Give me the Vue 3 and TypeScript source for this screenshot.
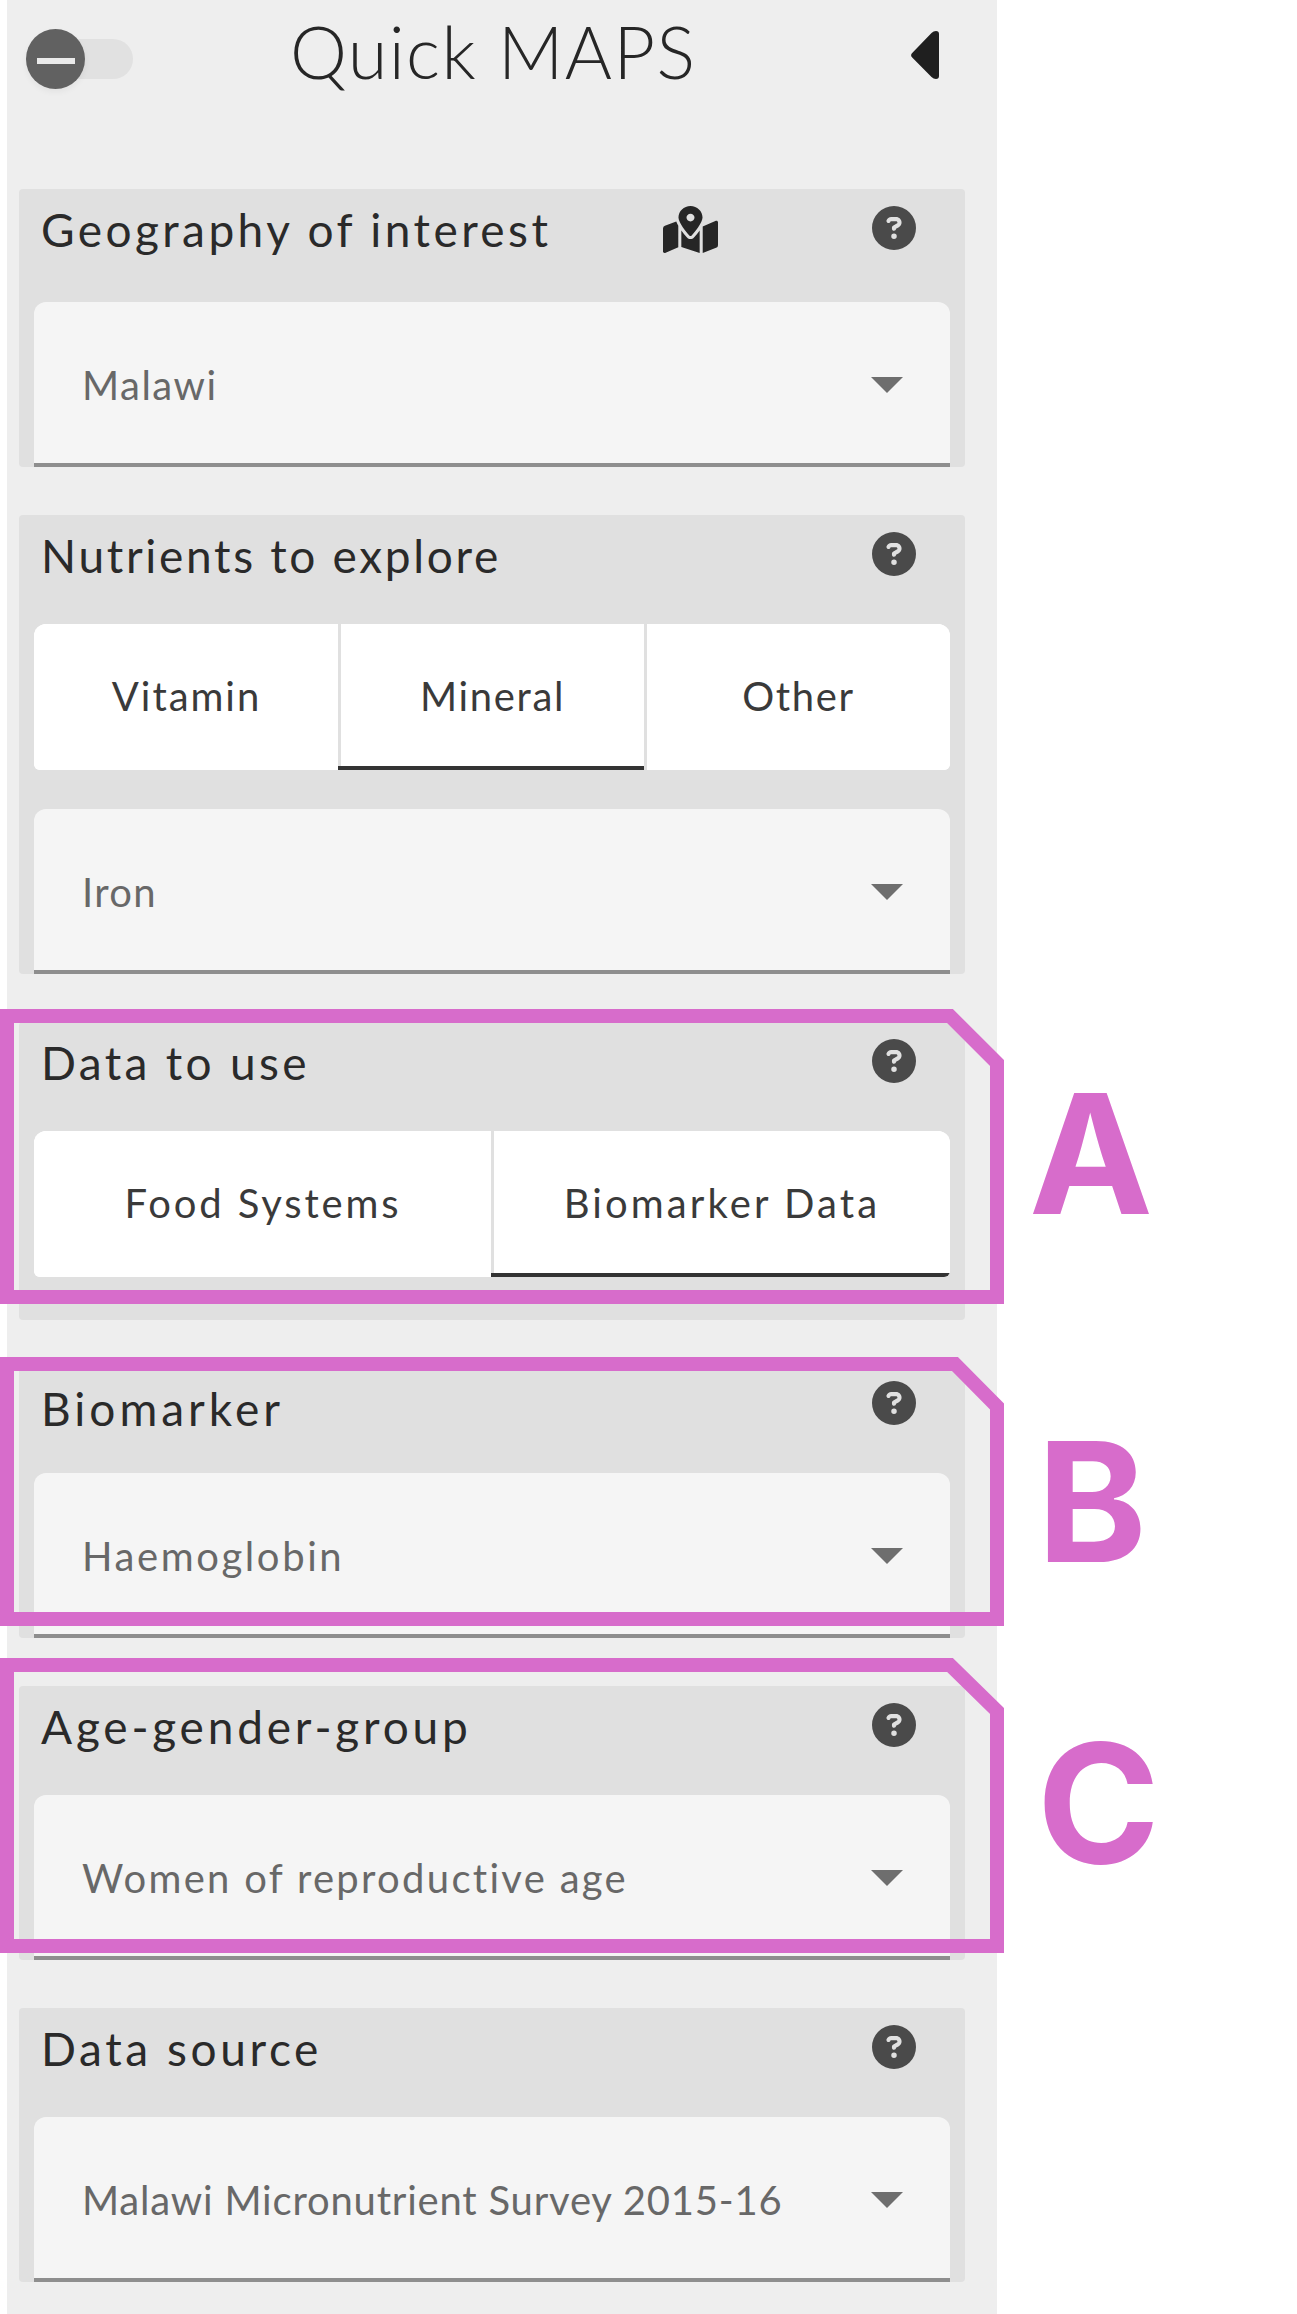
<script setup lang="ts">
import { ref } from 'vue'

interface Label {
  text: string
  spacing: number
}
interface Section {
  id: string
  title: Label
  map?: boolean
  tabs?: Label[]
  activeTab?: number
  select?: Label
}

const enabled = ref(false)

const sections = ref<Section[]>([
  {
    id: 'geography',
    title: { text: 'Geography of interest', spacing: 3.44 },
    map: true,
    select: { text: 'Malawi', spacing: 1.5 },
  },
  {
    id: 'nutrients',
    title: { text: 'Nutrients to explore', spacing: 2.68 },
    tabs: [
      { text: 'Vitamin', spacing: 1.95 },
      { text: 'Mineral', spacing: 1.67 },
      { text: 'Other', spacing: 1.66 },
    ],
    activeTab: 1,
    select: { text: 'Iron', spacing: 1.3 },
  },
  {
    id: 'data',
    title: { text: 'Data to use', spacing: 3.35 },
    tabs: [
      { text: 'Food Systems', spacing: 2.86 },
      { text: 'Biomarker Data', spacing: 3.1 },
    ],
    activeTab: 1,
  },
  {
    id: 'biomarker',
    title: { text: 'Biomarker', spacing: 4 },
    select: { text: 'Haemoglobin', spacing: 2.6 },
  },
  {
    id: 'group',
    title: { text: 'Age-gender-group', spacing: 3.8 },
    select: { text: 'Women of reproductive age', spacing: 2.3 },
  },
  {
    id: 'source',
    title: { text: 'Data source', spacing: 3.6 },
    select: { text: 'Malawi Micronutrient Survey 2015-16', spacing: 0.8 },
  },
])

const outlines = [
  'M7 1016H950L997 1063V1297H7Z',
  'M7 1364H955L997 1406.5V1619H7Z',
  'M7 1665H950L997 1711V1946H7Z',
]

const spacing = (l: Label) => ({ letterSpacing: l.spacing + 'px' })
</script>

<template>
  <div class="page">
    <aside class="panel">
      <header class="header">
        <button class="toggle" type="button" aria-label="Toggle" @click="enabled = !enabled">
          <span class="thumb"><span class="minus"></span></span>
        </button>
        <h1 class="heading">Quick MAPS</h1>
        <svg class="collapse" viewBox="0 0 28 48">
          <path d="M1.2 22L20.5 2Q22.5 0 25 0Q28 0 28 3V45Q28 48 25 48Q22.5 48 20.5 46L1.2 26.5Q-1 24.2 1.2 22Z" />
        </svg>
      </header>

      <section v-for="s in sections" :key="s.id" class="card" :class="s.id">
        <div class="title-row">
          <h2 class="title" :style="spacing(s.title)">{{ s.title.text }}</h2>
          <svg v-if="s.map" class="map" viewBox="0 0 576 512" preserveAspectRatio="none">
            <path
              d="M288 0c-69.59 0-126 56.41-126 126 0 56.26 82.35 158.8 113.9 196.02 6.39 7.54 17.82 7.54 24.2 0C331.65 284.8 414 182.26 414 126 414 56.41 357.59 0 288 0zm0 168c-23.2 0-42-18.8-42-42s18.8-42 42-42 42 18.8 42 42-18.8 42-42 42zM20.12 215.95A32.006 32.006 0 0 0 0 245.66v250.32c0 11.32 11.43 19.06 21.94 14.86L160 448V214.92c-8.84-15.98-16.07-31.54-21.25-46.42L20.12 215.95zM288 359.67c-14.07 0-27.38-6.18-36.51-16.96-19.66-23.2-40.57-49.62-59.49-76.72v182l192 64V266c-18.92 27.09-39.82 53.52-59.49 76.72-9.13 10.77-22.44 16.95-36.51 16.95zm266.06-198.51L416 224v288l139.88-55.95A31.996 31.996 0 0 0 576 426.34V176.02c0-11.32-11.43-19.06-21.94-14.86z"
            />
          </svg>
          <svg class="help" viewBox="0 0 512 512">
            <path
              d="M256 512A256 256 0 1 0 256 0a256 256 0 1 0 0 512zM169.8 165.3c7.9-22.3 29.1-37.3 52.8-37.3h58.3c34.9 0 63.1 28.3 63.1 63.1c0 22.6-12.1 43.5-31.7 54.8L280 264.4c-.2 13-10.9 23.6-24 23.6c-13.3 0-24-10.7-24-24V250.5c0-8.6 4.6-16.5 12.1-20.8l44.3-25.4c4.7-2.7 7.6-7.7 7.6-13.1c0-8.4-6.8-15.1-15.1-15.1H222.6c-3.4 0-6.4 2.1-7.5 5.3l-.4 1.2c-4.4 12.5-18.2 19-30.6 14.6s-19-18.2-14.6-30.6l.4-1.2zM224 352a32 32 0 1 1 64 0 32 32 0 1 1 -64 0z"
            />
          </svg>
        </div>

        <div v-if="s.tabs" class="tabs">
          <button
            v-for="(t, i) in s.tabs"
            :key="t.text"
            type="button"
            class="tab"
            :class="{ active: i === s.activeTab }"
            @click="s.activeTab = i"
          >
            <span :style="spacing(t)">{{ t.text }}</span>
          </button>
        </div>

        <div v-if="s.select" class="select">
          <span class="value" :style="spacing(s.select)">{{ s.select.text }}</span>
          <svg class="caret" viewBox="0 0 32 16"><path d="M0 0H32L16 16Z" /></svg>
        </div>
      </section>
    </aside>

    <svg class="outlines" viewBox="0 0 1297 2314">
      <path v-for="d in outlines" :key="d" :d="d" />
    </svg>
    <span class="mark mark-a">A</span>
    <span class="mark mark-b">B</span>
    <span class="mark mark-c">C</span>
  </div>
</template>

<style>
body {
  background: #fff;
}
</style>

<style scoped>
.page {
  position: relative;
  width: 1297px;
  height: 2314px;
  overflow: hidden;
  background: #fff;
  font-family: Lato, "Liberation Sans", sans-serif;
}
.panel {
  box-sizing: border-box;
  width: 990px;
  height: 2314px;
  margin-left: 7px;
  padding: 0 32px 0 12px;
  background: #eee;
}
.header {
  display: flex;
  align-items: flex-start;
  height: 189px;
}
.toggle {
  display: flex;
  align-items: center;
  width: 97px;
  height: 40px;
  margin: 39px 0 0 17px;
  padding: 0;
  border: 0;
  border-radius: 0 20px 20px 0;
  background: linear-gradient(90deg, transparent 25px, #e1e1e1 25px);
}
.thumb {
  display: flex;
  flex: none;
  align-items: center;
  justify-content: center;
  width: 59px;
  height: 60px;
  margin-left: -10px;
  border-radius: 50%;
  background: #616161;
  box-shadow: 0 3px 6px rgba(0, 0, 0, 0.05);
}
.minus {
  width: 38px;
  height: 6px;
  margin-top: 3px;
  background: #eaeaea;
}
.heading {
  width: 438px;
  margin: 8px 0 0 157px;
  color: #262626;
  font-size: 72px;
  font-weight: 300;
  line-height: 86px;
  letter-spacing: 1.4px;
  white-space: nowrap;
}
.collapse {
  width: 28px;
  height: 48px;
  margin: 31px 0 0 183px;
  fill: #1f1f1f;
}
.card {
  box-sizing: border-box;
  display: flex;
  flex-direction: column;
  width: 946px;
  margin-bottom: 48px;
  padding: 0 15px;
  border-radius: 4px;
  background: #e0e0e0;
}
.title-row {
  display: flex;
  align-items: flex-start;
  flex: none;
  height: 109px;
}
.geography .title-row {
  height: 113px;
}
.data {
  height: 298px;
  margin-bottom: 44px;
}
.title {
  flex: none;
  width: 626px;
  margin: 14px 0 0 7px;
  color: #2a2a2a;
  font-size: 46px;
  font-weight: 400;
  line-height: 54px;
  white-space: nowrap;
}
.biomarker .title {
  margin-top: 18px;
}
.map {
  width: 55px;
  height: 47px;
  margin: 17px -55px 0 -4px;
  fill: #262626;
}
.help {
  width: 44px;
  height: 44px;
  margin: 16.5px 34px 0 auto;
  fill: #4a4a4a;
}
.tabs {
  display: flex;
  flex: none;
  height: 146px;
  overflow: hidden;
  border-radius: 12px 12px 6px 6px;
  background: #fff;
}
.tabs + .select {
  margin-top: 39px;
}
.tab {
  position: relative;
  box-sizing: border-box;
  flex: 1 1 0;
  min-width: 0;
  padding: 0 0 3px 1px;
  border: 0;
  background: #fff;
  color: #3a3a3a;
  font: 400 40px/46px Lato, "Liberation Sans", sans-serif;
  white-space: nowrap;
}
.tab + .tab {
  padding-left: 0;
  border-left: 3px solid #e0e0e0;
}
.tab.active::after {
  content: "";
  position: absolute;
  right: 0;
  bottom: 0;
  left: -3px;
  height: 4px;
  background: #333;
}
.select {
  box-sizing: border-box;
  display: flex;
  flex: none;
  align-items: center;
  justify-content: space-between;
  height: 165px;
  padding: 5px 47px 0 48px;
  border-bottom: 4px solid #8e8e8e;
  border-radius: 12px 12px 0 0;
  background: #f5f5f5;
}
.value {
  color: #686868;
  font-size: 40px;
  line-height: 47px;
  white-space: nowrap;
}
.caret {
  width: 32px;
  height: 16px;
  fill: #6e6e6e;
}
.outlines {
  position: absolute;
  inset: 0;
  width: 1297px;
  height: 2314px;
  fill: none;
  stroke: #d76ccb;
  stroke-width: 14;
  pointer-events: none;
}
.mark {
  position: absolute;
  color: #d76ccb;
  font: 700 166px/200px Inter, "Liberation Sans", sans-serif;
}
.mark-a {
  left: 1029px;
  top: 1054px;
}
.mark-b {
  left: 1037px;
  top: 1402px;
}
.mark-c {
  left: 1037px;
  top: 1703px;
}
</style>
